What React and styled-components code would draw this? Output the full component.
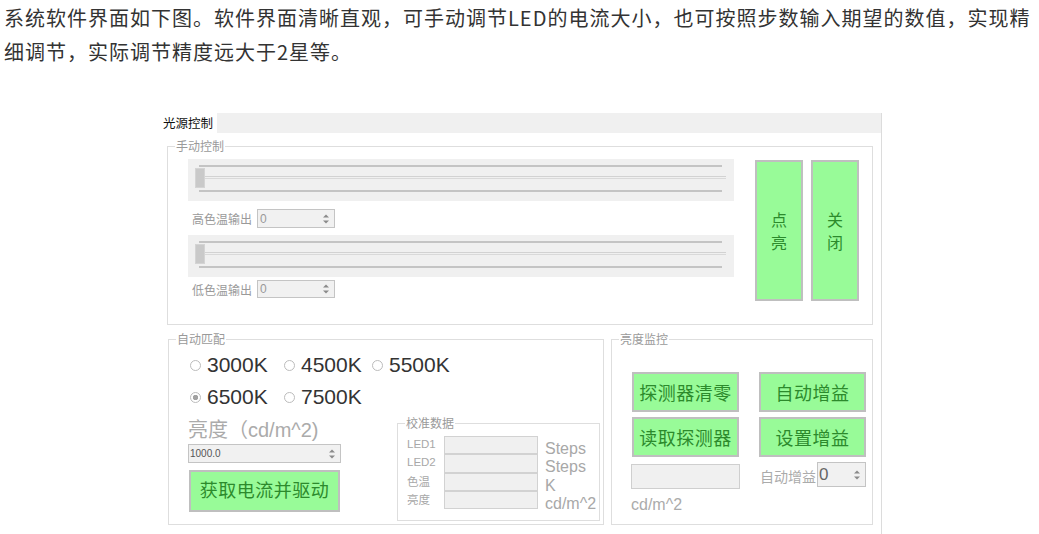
import React from 'react';
import styled, { createGlobalStyle } from 'styled-components';

const GlobalStyle = createGlobalStyle`
  html, body { margin: 0; padding: 0; background: #fff; }
  body { font-family: "Noto Sans CJK SC", sans-serif; }
  * { box-sizing: border-box; }
`;

const CJK = `"Noto Sans CJK SC", "Liberation Sans", sans-serif`;
const LATIN = `"Liberation Sans", "Noto Sans CJK SC", sans-serif`;

const Page = styled.div`
  width: 1039px;
  height: 534px;
  overflow: hidden;
`;

const Intro = styled.p`
  margin: 0;
  padding: 1px 0 0 4px;
  font-size: 20px;
  line-height: 34px;
  letter-spacing: 1px;
  color: #333;
  white-space: nowrap;
`;

const Shot = styled.div`
  margin: 44px 0 0 162px;
  width: 720px;
  font-family: ${CJK};
`;

const TabStrip = styled.div`
  display: flex;
  height: 20px;
  background: #f0f0f0;
  border-right: 1px solid #dcdcdc;
`;

const Tab = styled.div`
  width: 55px;
  padding-left: 1px;
  background: #fff;
  font-size: 12.5px;
  line-height: 20px;
  color: #111;
`;

const Panel = styled.div`
  height: 401px;
  padding: 7px 8px 0 5px;
  border-right: 1px solid #dcdcdc;
`;

const Group = styled.fieldset`
  margin: 0;
  padding: 0;
  min-width: 0;
  width: ${p => p.$w}px;
  height: ${p => p.$h}px;
  border: 1px solid #dedede;
  flex-shrink: 0;
`;

const Legend = styled.legend`
  margin-left: 7px;
  padding: 0 1px;
  font-size: 12px;
  line-height: 12px;
  color: #9a9a9a;
`;

/* ---------- 手动控制 ---------- */

const ManualBody = styled.div`
  display: flex;
  padding: 7px 0 0 20px;
`;

const SliderCol = styled.div`
  width: 546px;
  display: flex;
  flex-direction: column;
`;

const Slider = styled.div`
  position: relative;
  height: 42px;
  margin-top: ${p => p.$mt || 0}px;
  padding: 6px 0 0 11px;
  background: #f0f0f0;
`;

const TickLine = styled.div`
  width: 523px;
  height: 2px;
  margin-top: ${p => p.$mt || 0}px;
  background: #c4c4c4;
`;

const Track = styled.div`
  width: 529px;
  height: 3px;
  margin: 9px 0 0 -2px;
  border-top: 1px solid #d2d2d2;
  border-bottom: 1px solid #d9d9d9;
`;

const Thumb = styled.div`
  position: absolute;
  left: 7px;
  top: 9px;
  width: 10px;
  height: 20px;
  background: #c9c9c9;
  border: 1px solid #d4d4d4;
`;

const OutputRow = styled.div`
  display: flex;
  align-items: center;
  margin-top: ${p => p.$mt}px;
`;

const OutputLabel = styled.span`
  width: 69px;
  padding-left: 4px;
  font-size: 12px;
  color: #9a9a9a;
`;

const SpinBox = styled.div`
  display: flex;
  align-items: center;
  width: ${p => p.$w}px;
  height: ${p => p.$h}px;
  border: 1px solid #c4c4c4;
  background: #f1f1f1;
  flex-shrink: 0;
`;

const SpinValue = styled.span`
  flex: 1;
  padding-left: ${p => p.$pad}px;
  font-family: ${LATIN};
  font-size: ${p => p.$fs}px;
  color: ${p => p.$color};
`;

const SpinArrows = styled.svg`
  margin-right: 4px;
  flex-shrink: 0;
`;

const PowerButtons = styled.div`
  display: flex;
  gap: 8px;
  margin: 1px 0 0 21px;
`;

const GreenButton = styled.button`
  display: flex;
  flex-direction: ${p => (p.$vertical ? 'column' : 'row')};
  align-items: center;
  justify-content: center;
  width: ${p => p.$w}px;
  height: ${p => p.$h}px;
  margin: ${p => p.$m || 0};
  padding: 0 0 ${p => p.$pb || 0}px;
  background: #98fb98;
  border: 2px solid #bfbfbf;
  border-radius: 0;
  font-family: ${CJK};
  font-size: ${p => p.$fs}px;
  line-height: ${p => p.$lh || p.$fs + 6}px;
  color: #2c8a2c;
  letter-spacing: ${p => p.$ls || 0}px;
`;

/* ---------- 下半部分 ---------- */

const LowerRow = styled.div`
  display: flex;
  gap: 7px;
  margin: 8px 0 0 1px;
`;

const RadioGrid = styled.div`
  display: grid;
  grid-template-columns: 94px 88px auto;
  grid-auto-rows: 32px;
  padding: 4px 0 0 21px;
`;

const Radio = styled.label`
  display: flex;
  align-items: center;
  gap: 6px;
  font-family: ${LATIN};
  font-size: 21px;
  color: #333;
`;

const RadioDot = styled.span`
  width: 11px;
  height: 11px;
  border-radius: 50%;
  border: 1px solid #bcbcbc;
  background: ${p => (p.$checked ? 'radial-gradient(circle, #a2a2a2 0 2.4px, #fff 3px)' : '#fff')};
  flex-shrink: 0;
`;

const BrightRow = styled.div`
  display: flex;
  align-items: flex-start;
  margin-top: 4px;
  padding-left: 19px;
`;

const BrightCol = styled.div`
  width: 153px;
  display: flex;
  flex-direction: column;
`;

const BrightLabel = styled.div`
  margin-top: 1px;
  margin-bottom: 2px;
  font-family: ${LATIN};
  font-size: 20px;
  line-height: 24px;
  color: #ababab;
  white-space: nowrap;
`;

const CalibGrid = styled.div`
  display: grid;
  grid-template-columns: 37px 94px auto;
  grid-template-rows: 18px 19px 18px 18px;
  padding: 7px 0 0 9px;
`;

const CalibLabel = styled.span`
  font-size: 11.5px;
  line-height: 16px;
  color: #a8a8a8;
  font-family: ${p => (p.$latin ? LATIN : CJK)};
`;

const CalibField = styled.div`
  background: #f0f0f0;
  border: 1px solid #d2d2d2;
`;

const CalibUnit = styled.span`
  padding: 5px 0 0 7px;
  font-family: ${LATIN};
  font-size: 16px;
  line-height: 16px;
  color: #a8a8a8;
  white-space: nowrap;
`;

const MonitorGrid = styled.div`
  display: grid;
  grid-template-columns: 107px 107px;
  grid-auto-rows: 40px;
  column-gap: 20px;
  row-gap: 5px;
  padding: 27px 0 0 20px;
`;

const MonitorRow = styled.div`
  display: flex;
  align-items: flex-start;
  margin-top: 5px;
  padding-left: 19px;
`;

const ReadingBox = styled.div`
  width: 109px;
  height: 25px;
  margin-top: 2px;
  background: #f0f0f0;
  border: 1px solid #cfcfcf;
`;

const GainLabel = styled.span`
  width: 57px;
  margin: 2px 0 0 20px;
  font-size: 14px;
  line-height: 25px;
  color: #ababab;
  white-space: nowrap;
`;

const UnitText = styled.div`
  margin: 7px 0 0 19px;
  font-family: ${LATIN};
  font-size: 16px;
  line-height: 18px;
  color: #ababab;
`;

function Spin({ w, h, value, fs = 12, color = '#999', pad = 2 }) {
  return (
    <SpinBox $w={w} $h={h}>
      <SpinValue $fs={fs} $color={color} $pad={pad}>{value}</SpinValue>
      <SpinArrows width="8" height="12" viewBox="0 0 8 12">
        <polygon points="4,1.5 7,4.5 1,4.5" fill="#8a8a8a" />
        <polygon points="1,7.5 7,7.5 4,10.5" fill="#8a8a8a" />
      </SpinArrows>
    </SpinBox>
  );
}

function TrackBar({ mt }) {
  return (
    <Slider $mt={mt}>
      <TickLine />
      <Track />
      <TickLine $mt={11} />
      <Thumb />
    </Slider>
  );
}

const calibRows = [
  { label: 'LED1', latin: true, unit: 'Steps' },
  { label: 'LED2', latin: true, unit: 'Steps' },
  { label: '色温', unit: 'K' },
  { label: '亮度', unit: 'cd/m^2' },
];

export default function App() {
  return (
    <Page>
      <GlobalStyle />
      <Intro>
        系统软件界面如下图。软件界面清晰直观，可手动调节LED的电流大小，也可按照步数输入期望的数值，实现精
        <br />
        细调节，实际调节精度远大于2星等。
      </Intro>

      <Shot>
        <TabStrip>
          <Tab>光源控制</Tab>
        </TabStrip>
        <Panel>
          <Group $w={706} $h={185}>
            <Legend>手动控制</Legend>
            <ManualBody>
              <SliderCol>
                <TrackBar />
                <OutputRow $mt={8}>
                  <OutputLabel>高色温输出</OutputLabel>
                  <Spin w={78} h={19} value="0" />
                </OutputRow>
                <TrackBar mt={7} />
                <OutputRow $mt={3}>
                  <OutputLabel>低色温输出</OutputLabel>
                  <Spin w={78} h={18} value="0" />
                </OutputRow>
              </SliderCol>
              <PowerButtons>
                <GreenButton $vertical $w={48} $h={141} $fs={16} $lh={23}>
                  <span>点</span>
                  <span>亮</span>
                </GreenButton>
                <GreenButton $vertical $w={48} $h={141} $fs={16} $lh={23}>
                  <span>关</span>
                  <span>闭</span>
                </GreenButton>
              </PowerButtons>
            </ManualBody>
          </Group>

          <LowerRow>
            <Group $w={436} $h={192}>
              <Legend>自动匹配</Legend>
              <RadioGrid>
                <Radio><RadioDot />3000K</Radio>
                <Radio><RadioDot />4500K</Radio>
                <Radio><RadioDot />5500K</Radio>
                <Radio><RadioDot $checked />6500K</Radio>
                <Radio><RadioDot />7500K</Radio>
              </RadioGrid>
              <BrightRow>
                <BrightCol>
                  <BrightLabel>亮度（cd/m^2)</BrightLabel>
                  <Spin w={153} h={19} value="1000.0" fs={10} color="#555" pad={1} />
                  <GreenButton $w={151} $h={42} $fs={18} $m="7px 0 0 1px" $pb={4} $ls={0.5}>
                    获取电流并驱动
                  </GreenButton>
                </BrightCol>
                <Group $w={203} $h={104} style={{ marginLeft: 56 }}>
                  <Legend>校准数据</Legend>
                  <CalibGrid>
                    {calibRows.map(r => (
                      <React.Fragment key={r.label}>
                        <CalibLabel $latin={r.latin}>{r.label}</CalibLabel>
                        <CalibField />
                        <CalibUnit>{r.unit}</CalibUnit>
                      </React.Fragment>
                    ))}
                  </CalibGrid>
                </Group>
              </BrightRow>
            </Group>

            <Group $w={262} $h={192}>
              <Legend>亮度监控</Legend>
              <MonitorGrid>
                <GreenButton $w={107} $h={40} $fs={18} $ls={0.5}>探测器清零</GreenButton>
                <GreenButton $w={107} $h={40} $fs={18} $ls={0.5}>自动增益</GreenButton>
                <GreenButton $w={107} $h={40} $fs={18} $ls={0.5}>读取探测器</GreenButton>
                <GreenButton $w={107} $h={40} $fs={18} $ls={0.5}>设置增益</GreenButton>
              </MonitorGrid>
              <MonitorRow>
                <ReadingBox />
                <GainLabel>自动增益</GainLabel>
                <Spin w={49} h={25} value="0" fs={17} color="#666" pad={1} />
              </MonitorRow>
              <UnitText>cd/m^2</UnitText>
            </Group>
          </LowerRow>
        </Panel>
      </Shot>
    </Page>
  );
}
